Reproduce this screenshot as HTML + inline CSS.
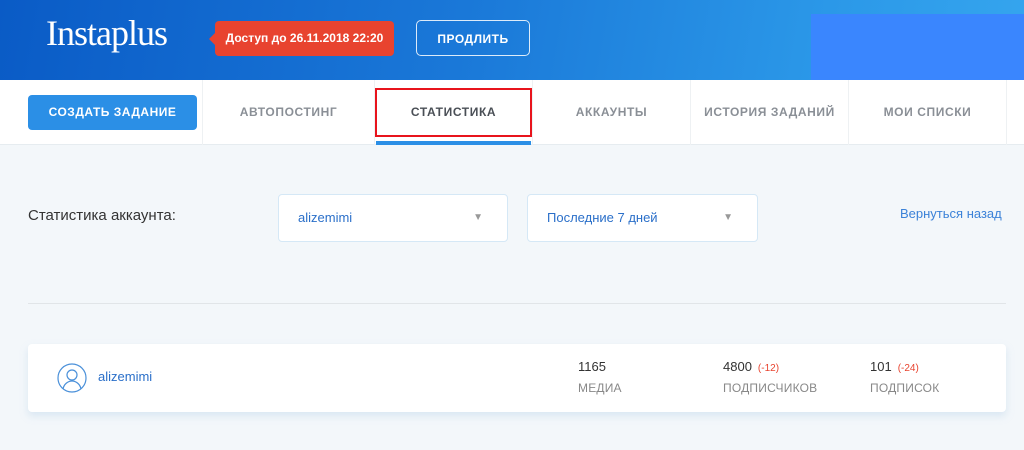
<!DOCTYPE html>
<html><head><meta charset="utf-8"><style>
*{margin:0;padding:0;box-sizing:border-box}
body{width:1024px;height:450px;overflow:hidden;background:#f3f7fa;font-family:"Liberation Sans","Noto Sans CJK SC",sans-serif;position:relative}
.hdr{position:absolute;left:0;top:0;width:1024px;height:80px;background:linear-gradient(100deg,#0a5bc6 0%,#1a78d8 45%,#2b98e8 80%,#35a5ee 100%)}
.rbox{position:absolute;left:811px;top:14px;width:213px;height:66px;background:#3a86fe}
.logo{position:absolute;left:46px;top:12px;color:#fff;font:36px "Liberation Serif",serif;letter-spacing:-1px;font-weight:normal}
.badge{position:absolute;left:215px;top:21px;width:179px;height:35px;background:#e8432f;border-radius:4px;color:#fff;font:bold 12px "Liberation Sans",sans-serif;line-height:35px;text-align:center}
.badge:before{content:"";position:absolute;left:-6px;top:12px;border:6px solid transparent;border-left:0;border-right-color:#e8432f}
.ext{position:absolute;left:416px;top:20px;width:114px;height:36px;border:1.5px solid rgba(255,255,255,.85);border-radius:5px;color:#fff;font:bold 12px sans-serif;line-height:36px;text-align:center;letter-spacing:.5px}
.nav{position:absolute;left:0;top:80px;width:1024px;height:65px;background:#fff;border-bottom:1px solid #e6ecf0}
.btn{position:absolute;left:28px;top:15px;width:169px;height:35px;background:#2b8fe6;border-radius:4px;color:#fff;font:bold 12px sans-serif;line-height:35px;text-align:center;letter-spacing:.5px}
.tab{position:absolute;top:0;height:65px;border-left:1px solid #eef1f3;color:#8a8f96;font:bold 12px sans-serif;line-height:65px;text-align:center;letter-spacing:.6px}
.act{color:#4a4f56}
.ul{position:absolute;left:376px;top:141px;width:155px;height:4px;background:#2b8fe6}
.red{position:absolute;left:375px;top:88px;width:157px;height:49px;border:2px solid #e8141c}
.lbl{position:absolute;left:28px;top:207px;font-size:15px;color:#333}
.sel{position:absolute;top:194px;height:48px;background:#fff;border:1px solid #d5e8f6;border-radius:4px;color:#2a6fc9;font-size:13px;line-height:46px;padding-left:19px}
.sel span{position:absolute;right:24px;color:#999;font-size:10px}
.back{position:absolute;left:900px;top:206px;color:#3b82d8;font-size:13px}
.hr{position:absolute;left:28px;top:303px;width:978px;height:1px;background:#e1e5e8}
.card{position:absolute;left:28px;top:344px;width:978px;height:68px;background:#fff;border-radius:4px;box-shadow:0 4px 8px rgba(170,200,230,.35)}
.num{position:absolute;font-size:13px;color:#333}
.num i{font-style:normal;color:#e8432f;font-size:10px;margin-left:6px}
.cap{position:absolute;font-size:12px;color:#888;letter-spacing:.2px}
</style></head><body>
<div class="hdr"></div><div class="rbox"></div>
<div class="logo">Instaplus</div>
<div class="badge">Доступ до 26.11.2018 22:20</div>
<div class="ext">ПРОДЛИТЬ</div>
<div class="nav">
<div class="btn">СОЗДАТЬ ЗАДАНИЕ</div>
<div class="tab" style="left:202px;width:172px">АВТОПОСТИНГ</div>
<div class="tab act" style="left:374px;width:158px">СТАТИСТИКА</div>
<div class="tab" style="left:532px;width:158px">АККАУНТЫ</div>
<div class="tab" style="left:690px;width:158px">ИСТОРИЯ ЗАДАНИЙ</div>
<div class="tab" style="left:848px;width:158px">МОИ СПИСКИ</div>
<div class="tab" style="left:1006px;width:18px"></div>
</div>
<div class="ul"></div><div class="red"></div>
<div class="lbl">Статистика аккаунта:</div>
<div class="sel" style="left:278px;width:230px">alizemimi<span>▼</span></div>
<div class="sel" style="left:527px;width:231px">Последние 7 дней<span>▼</span></div>
<div class="back">Вернуться назад</div>
<div class="hr"></div>
<div class="card">
<svg style="position:absolute;left:29px;top:18px" width="30" height="32" viewBox="0 0 30 32"><circle cx="15" cy="16" r="14" fill="none" stroke="#4a90d9" stroke-width="1.2"/><circle cx="15" cy="13" r="5" fill="none" stroke="#4a90d9" stroke-width="1.2"/><path d="M6 27c1-5 5-8 9-8s8 3 9 8" fill="none" stroke="#4a90d9" stroke-width="1.2"/></svg>
<div style="position:absolute;left:70px;top:25px;color:#2a6fc9;font-size:13px">alizemimi</div>
<div class="num" style="left:550px;top:15px">1165</div><div class="cap" style="left:550px;top:37px">МЕДИА</div>
<div class="num" style="left:695px;top:15px">4800<i>(-12)</i></div><div class="cap" style="left:695px;top:37px">ПОДПИСЧИКОВ</div>
<div class="num" style="left:842px;top:15px">101<i>(-24)</i></div><div class="cap" style="left:842px;top:37px">ПОДПИСОК</div>
</div>
</body></html>
